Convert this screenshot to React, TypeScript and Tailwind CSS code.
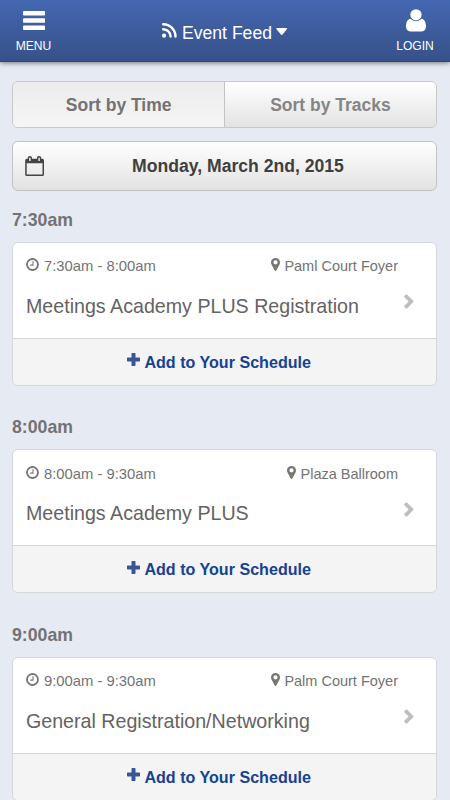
import React from "react";

const MenuIcon = () => (
  <svg width="22" height="20" viewBox="0 0 22 20" fill="#fff">
    <rect width="22" height="4.6" rx="0.8" />
    <rect y="7.2" width="22" height="4.6" rx="0.8" />
    <rect y="14.4" width="22" height="4.6" rx="0.8" />
  </svg>
);

const UserIcon = () => (
  <svg width="20" height="23" viewBox="0 0 20 23" fill="#fff">
    <path d="M4.6 9.7C6 11.3 7.9 12.2 10 12.2S14 11.3 15.4 9.7C18.7 10 20 13.5 20 17.6C20 20.6 18.3 22.4 15.8 22.4H4.2C1.7 22.4 0 20.6 0 17.6C0 13.5 1.3 10 4.6 9.7Z" />
    <circle cx="10" cy="5.8" r="5.6" />
  </svg>
);

const RssIcon = () => (
  <svg width="15" height="15" viewBox="0 0 15 15" fill="none" stroke="#fff" strokeWidth="2.4" strokeLinecap="round">
    <circle cx="2.1" cy="12.7" r="2.1" fill="#fff" stroke="none" />
    <path d="M1.2 6.2A7.4 7.4 0 0 1 8.6 13.6M1.2 1.3A12.3 12.3 0 0 1 13.5 13.6" />
  </svg>
);

const CalendarIcon = () => (
  <svg width="20" height="21" viewBox="0 0 20 21">
    <path
      fill="#444"
      fillRule="evenodd"
      d="M1.8 2.7H2.8V2C2.8 .8 3.7 .1 4.9 .1S7 .8 7 2V2.7H12V2C12 .8 12.9 .1 14.1 .1S16.2 .8 16.2 2V2.7H17.4Q19 2.7 19 4.3V18.5Q19 20.1 17.4 20.1H1.8Q.2 20.1 .2 18.5V4.3Q.2 2.7 1.8 2.7ZM1.7 7.3V18.6H17.5V7.3ZM4.2 1.8V5H5.6V1.8ZM13.4 1.8V5H14.8V1.8Z"
    />
  </svg>
);

const ClockIcon = () => (
  <svg width="13" height="13" viewBox="0 0 13 13" fill="none" stroke="#777">
    <circle cx="6.5" cy="6.5" r="5.5" strokeWidth="1.8" />
    <path d="M7 3.2V7.1H4.2" strokeWidth="1.1" />
  </svg>
);

const PinIcon = () => (
  <svg width="9" height="13" viewBox="0 0 9 13" fill="#777">
    <path
      fillRule="evenodd"
      d="M4.5 0C7 0 9 1.9 9 4.3C9 5.2 8.8 5.8 8.5 6.4L5.3 12.4Q4.5 13.5 3.7 12.4L.5 6.4C.2 5.8 0 5.2 0 4.3C0 1.9 2 0 4.5 0ZM4.5 2.2A2.1 2.1 0 1 0 4.5 6.4A2.1 2.1 0 1 0 4.5 2.2Z"
    />
  </svg>
);

const ChevronIcon = () => (
  <svg width="10" height="15" viewBox="0 0 10 15" fill="#bebebe">
    <path d="M.3 2.3L2 .5Q2.5 0 3 .5L9.4 7Q9.8 7.5 9.4 8L3 14.5Q2.5 15 2 14.5L.3 12.7Q-.1 12.2 .3 11.8L4.6 7.5L.3 3.2Q-.1 2.8 .3 2.3Z" />
  </svg>
);

const PlusIcon = () => (
  <svg width="13" height="13" viewBox="0 0 13 13" fill="#375597">
    <path d="M5.2 0H7.8Q8.5 0 8.5 .7V4.5H12.3Q13 4.5 13 5.2V7.8Q13 8.5 12.3 8.5H8.5V12.3Q8.5 13 7.8 13H5.2Q4.5 13 4.5 12.3V8.5H.7Q0 8.5 0 7.8V5.2Q0 4.5 .7 4.5H4.5V.7Q4.5 0 5.2 0Z" />
  </svg>
);

type Session = { start: string; time: string; place: string; title: string };

const sessions: Session[] = [
  { start: "7:30am", time: "7:30am - 8:00am", place: "Paml Court Foyer", title: "Meetings Academy PLUS Registration" },
  { start: "8:00am", time: "8:00am - 9:30am", place: "Plaza Ballroom", title: "Meetings Academy PLUS" },
  { start: "9:00am", time: "9:00am - 9:30am", place: "Palm Court Foyer", title: "General Registration/Networking" },
];

function SessionBlock({ start, time, place, title }: Session) {
  return (
    <section className="h-[207.5px] shrink-0">
      <h2 className="h-[34px] pt-px text-[17.7px] leading-[22px] font-bold text-[#757273]">{start}</h2>
      <article className="mr-px ml-[0.4px] h-[144px] overflow-hidden rounded-[6px] border border-[#d5d6d7]">
        <div className="h-[95px] bg-white pr-[38px] pl-[12.6px] pt-[12.5px]">
          <div className="flex h-[20px] justify-between text-[14.8px] leading-[22px] text-[#737373]">
            <span className="flex gap-[5px]">
              <span className="pt-[3px]"><ClockIcon /></span>
              {time}
            </span>
            <span className="flex gap-[4px] text-[14.5px]">
              <span className="pt-[3px]"><PinIcon /></span>
              {place}
            </span>
          </div>
          <div className="-mr-[16px] mt-[17px] flex justify-between">
            <h3 className="pt-[0.5px] text-[19.65px] leading-[27px] whitespace-nowrap text-[#656263]">{title}</h3>
            <span className="pt-[2px]"><ChevronIcon /></span>
          </div>
        </div>
        <button className="flex h-[47px] w-full justify-center gap-[4px] border-t border-[#d5d6d7] bg-[#f4f4f4] pr-[11px] pt-[12.4px] text-[16.1px] leading-[22px] font-bold text-[#164292]">
          <span className="pt-[2.6px]"><PlusIcon /></span>
          Add to Your Schedule
        </button>
      </article>
    </section>
  );
}

export default function App() {
  return (
    <div className="flex h-[800px] w-[450px] flex-col overflow-hidden bg-[#e6ebf3] font-['Liberation_Sans',Arial,sans-serif]">
      <header className="flex h-[62px] shrink-0 justify-between border-b border-[#2c4580] bg-linear-to-b from-[#4467b1] to-[#375189] px-[16px] text-white shadow-[0_1px_5px_rgba(0,0,0,0.5)]">
        <button className="flex w-[35px] flex-col items-center pt-[11px]">
          <span className="-mr-px"><MenuIcon /></span>
          <span className="mt-[6px] text-[12.1px] leading-[18px]">MENU</span>
        </button>
        <h1 className="flex pt-[21px] pl-[3px] text-[17.6px] leading-[24px]">
          <span className="pt-[2px] pr-[5px]"><RssIcon /></span>
          Event Feed
          <svg width="12" height="8" viewBox="0 0 12 8" className="mt-[7px] ml-[4px]" fill="#fff">
            <path d="M1 0H10.4Q11.5 0 11 1L6.3 6.7Q5.7 7.2 5.1 6.7L.4 1Q0 0 1 0Z" />
          </svg>
        </h1>
        <button className="flex w-[38px] flex-col items-center pt-[9px]">
          <span className="pl-[2px]"><UserIcon /></span>
          <span className="mt-[5px] text-[12.1px] leading-[18px]">LOGIN</span>
        </button>
      </header>
      <main className="flex flex-col px-[12px] pt-[19px]">
        <div className="mr-px ml-[0.4px] flex h-[47px] shrink-0 overflow-hidden rounded-[6px] border border-[#c9c9c8] text-[17.5px] font-bold">
          <button className="w-[211.6px] border-r border-[#c3c3c3] bg-linear-to-b from-[#ececec] to-[#f5f5f5] pt-[2px] text-[#757273]">Sort by Time</button>
          <button className="flex-1 bg-linear-to-b from-white to-[#e3e3e3] pt-[2px] text-[#858585]">Sort by Tracks</button>
        </div>
        <button className="mt-[13px] mr-px ml-[0.4px] flex h-[50px] shrink-0 items-center rounded-[6px] border border-[#c3c3c3] bg-linear-to-b from-white to-[#e2e2e2] pl-[11.6px] text-[17.6px] font-bold text-[#3f3f3f]">
          <CalendarIcon />
          <span className="flex-1 pr-[5px]">Monday, March 2nd, 2015</span>
        </button>
        <div className="mt-[16.5px] flex flex-col">
          {sessions.map((session) => (
            <SessionBlock key={session.start} {...session} />
          ))}
        </div>
      </main>
    </div>
  );
}
